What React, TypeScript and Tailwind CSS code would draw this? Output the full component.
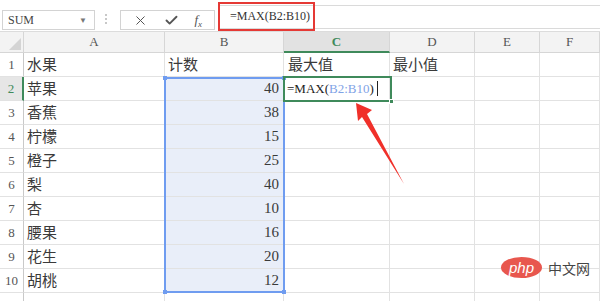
import { Check, X } from 'lucide-react';

const serif = "font-['Liberation_Serif','Noto_Sans_CJK_SC',serif]";
const cjk = "font-['Noto_Sans_CJK_SC','Noto_Sans',sans-serif]";

const colTemplate = 'grid-cols-[24px_141px_119px_106px_85px_65px_60px]';
const letters = ['A', 'B', 'C', 'D', 'E', 'F'];

const data: [string, string][] = [
  ['苹果', '40'],
  ['香蕉', '38'],
  ['柠檬', '15'],
  ['橙子', '25'],
  ['梨', '40'],
  ['杏', '10'],
  ['腰果', '16'],
  ['花生', '20'],
  ['胡桃', '12'],
];

function Toolbar() {
  return (
    <div className="relative flex h-[32px] items-start border-b border-[#dcdcdc] bg-white">
      <div className="mt-[10px] ml-[2px] flex h-[20px] w-[93px] items-center justify-between border border-[#d3d3d3] bg-white pl-[5px] pr-[7px]">
        <span className={`${serif} text-[12px] text-[#444]`}>SUM</span>
        <span className="text-[8px] text-[#777]">▼</span>
      </div>
      <div className="mt-[14px] ml-[10px] flex w-[3px] flex-col gap-[2px]">
        <span className="h-[2px] w-[2px] bg-[#c8c8c8]" />
        <span className="h-[2px] w-[2px] bg-[#c8c8c8]" />
        <span className="h-[2px] w-[2px] bg-[#c8c8c8]" />
      </div>
      <div className="mt-[10px] ml-[12px] flex h-[20px] w-[95px] items-center justify-around border border-[#d3d3d3] bg-white px-[4px]">
        <X size={15} strokeWidth={1.6} className="text-[#555]" />
        <Check size={15} strokeWidth={3} className="text-[#555]" />
        <span className={`${serif} text-[13px] italic text-[#555]`}>
          f<sub className="text-[9px]">x</sub>
        </span>
      </div>
      <div className="mt-[5px] ml-[3px] flex h-[24px] flex-1 items-center border-y border-[#dadada] bg-white">
        <div className="-mt-[2px] flex h-[29px] w-[97px] items-center border-2 border-[#e53935] pl-[10px]">
          <span className={`${serif} text-[12px] text-[#333]`}>=MAX(B2:B10)</span>
        </div>
      </div>
    </div>
  );
}

function Header() {
  return (
    <>
      <div className="relative border-b border-r border-[#d6d6d6] bg-[#f3f3f3]">
        <div className="absolute right-[2px] bottom-[2px] h-0 w-0 border-b-[12px] border-l-[12px] border-b-[#d4d4d4] border-l-transparent" />
      </div>
      {letters.map((l, i) => (
        <div
          key={l}
          className={`${serif} flex items-center justify-center text-[13px] ${
            i === 2
              ? 'border-b-2 border-r border-b-[#3f8a5b] border-r-[#d6d6d6] bg-[#e2e2e2] font-bold text-[#3f8a5b]'
              : 'border-b border-r border-[#d6d6d6] bg-[#f3f3f3] text-[#555]'
          }`}
        >
          {l}
        </div>
      ))}
    </>
  );
}

function RowNum({ n, active }: { n: number; active?: boolean }) {
  return (
    <div
      className={`${serif} flex items-center justify-center text-[13px] ${
        active
          ? 'border-r-2 border-b border-r-[#3f8a5b] border-b-[#e2e2e2] bg-[#e6e6e6] text-[#3f8a5b]'
          : 'border-r border-b border-r-[#c9c9c9] border-b-[#e2e2e2] bg-white text-[#555]'
      }`}
    >
      {n}
    </div>
  );
}

function Cell({ children, className = '' }: { children?: React.ReactNode; className?: string }) {
  return (
    <div className={`flex items-center whitespace-nowrap border-r border-b border-[#e2e2e2] ${className}`}>
      {children}
    </div>
  );
}

export default function App() {
  return (
    <div className="relative h-[301px] w-[600px] overflow-hidden bg-white">
      <Toolbar />
      <div className={`grid ${colTemplate} grid-rows-[21px_repeat(11,24px)]`}>
        <Header />

        <RowNum n={1} />
        <Cell className={`${cjk} pl-[3px] text-[15px] text-[#3a3a3a]`}>水果</Cell>
        <Cell className={`${cjk} pl-[3px] text-[15px] text-[#3a3a3a]`}>计数</Cell>
        <Cell className={`${cjk} pl-[4px] text-[15px] text-[#3a3a3a]`}>最大值</Cell>
        <Cell className={`${cjk} pl-[3px] text-[15px] text-[#3a3a3a]`}>最小值</Cell>
        <Cell />
        <Cell />

        {data.map(([name, count], i) => (
          <div key={name} className="contents">
            <RowNum n={i + 2} active={i === 0} />
            <Cell className={`${cjk} pl-[3px] text-[15px] text-[#3a3a3a]`}>{name}</Cell>
            <Cell className={`${serif} justify-end bg-[#e9eef9] pr-[4px] text-[15px] text-[#3a3a3a]`}>{count}</Cell>
            <Cell className={`${serif} pl-[3px] text-[13px] text-[#222]`}>
              {i === 0 && (
                <>
                  =MAX(<span className="text-[#7fa3e6]">B2:B10</span>)
                  <span className="ml-[3px] inline-block h-[15px] w-px bg-[#222]" />
                </>
              )}
            </Cell>
            <Cell />
            <Cell />
            <Cell />
          </div>
        ))}

        <RowNum n={11} />
        <Cell />
        <Cell />
        <Cell />
        <Cell />
        <Cell />
        <Cell />
      </div>

      {/* range selection B2:B10 */}
      <div className="pointer-events-none absolute top-[77px] left-[164px] h-[216px] w-[121px] border-2 border-[#6f9cf0]">
        <span className="absolute -top-[3px] -left-[3px] h-[4px] w-[4px] bg-[#6f9cf0]" />
        <span className="absolute -top-[3px] -right-[3px] h-[4px] w-[4px] bg-[#6f9cf0]" />
        <span className="absolute -bottom-[3px] -left-[3px] h-[4px] w-[4px] bg-[#6f9cf0]" />
        <span className="absolute -bottom-[3px] -right-[3px] h-[4px] w-[4px] bg-[#6f9cf0]" />
      </div>

      {/* active cell C2 */}
      <div className="pointer-events-none absolute top-[76px] left-[283px] h-[26px] w-[109px] border-2 border-[#3f8a5b]">
        <span className="absolute -right-[4px] -bottom-[4px] h-[5px] w-[5px] border border-white bg-[#3f8a5b]" />
      </div>

      {/* red arrow */}
      <svg className="pointer-events-none absolute top-0 left-0" width="600" height="301">
        <polygon points="356,103 372,110 367,114 404,184 362,117 358,121" fill="#f0302a" />
      </svg>

      {/* watermark */}
      <div className="absolute top-[257px] left-[501px] flex items-center gap-[6px]">
        <div className="flex h-[21px] w-[41px] items-center justify-center rounded-[50%] bg-[#e8574e]">
          <span className="font-['Liberation_Sans',sans-serif] text-[15px] italic leading-none text-white">php</span>
        </div>
        <span className={`${cjk} text-[14px] leading-none text-[#444]`}>中文网</span>
      </div>
    </div>
  );
}
